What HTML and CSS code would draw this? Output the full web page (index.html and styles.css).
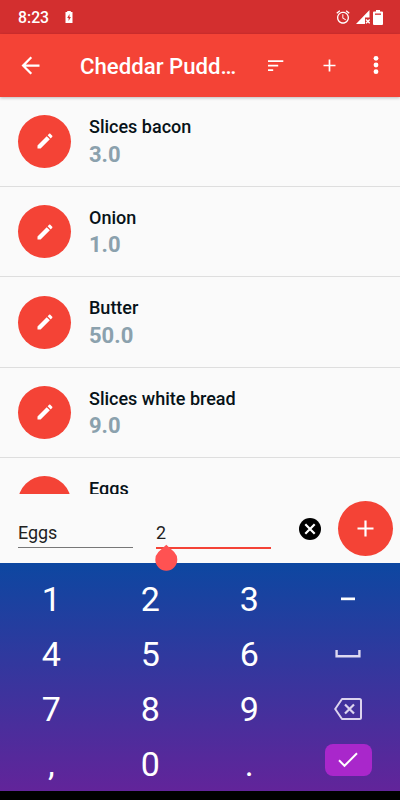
FILE: index.html
```
<!DOCTYPE html>
<html lang="en">
<head>
    <meta charset="UTF-8">
    <meta name="viewport" content="width=device-width, initial-scale=1.0">
    <title>Cheddar Pudding</title>
    <link rel="stylesheet" href="styles.css">
</head>
<body>
    <div class="status">
        <span class="time">8:23</span>
        <svg class="saver" width="8" height="12" viewBox="0 0 8 12"><path fill="#fff" fill-rule="evenodd" d="M2.2 0h3.6v1H7.5v11H.5V1h1.7zM4.5 3L2.2 7h1.4v3l2.300-4H4.500z"/></svg>
        <div class="status-right">
            <svg width="16" height="16" viewBox="0 0 24 24"><path fill="#fff" d="M22 5.720l-4.600-3.860-1.290 1.530 4.600 3.860L22 5.720zM7.880 3.390L6.600 1.860 2 5.710l1.290 1.530 4.590-3.850zM12.500 8H11v6l4.750 2.850.750-1.230-4-2.370V8zM12 4c-4.970 0-9 4.030-9 9s4.020 9 9 9c4.970 0 9-4.030 9-9s-4.030-9-9-9zm0 16c-3.870 0-7-3.130-7-7s3.130-7 7-7 7 3.130 7 7-3.130 7-7 7z"/></svg>
            <svg class="signal" width="14" height="14" viewBox="0 0 14 14"><path fill="#fff" d="M13.500 0v7.500H9V14H0z"/><path stroke="#fff" stroke-width="1.400" d="M10 9.500l3.700 3.700M13.700 9.500L10 13.200"/></svg>
            <svg class="battery" width="10" height="15" viewBox="0 0 10 15"><path fill="#fff" d="M3 0h4v1.500h2q1 0 1 1V14q0 1-1 1H1q-1 0-1-1V2.500q0-1 1-1h2z"/><path fill="#d32f2f" d="M2 3.500h6v1.300H2z"/></svg>
        </div>
    </div>
    <div class="appbar">
        <svg class="back" width="27" height="27" viewBox="0 0 24 24"><path fill="#fff" d="M20 11H7.830l5.590-5.590L12 4l-8 8 8 8 1.410-1.410L7.830 13H20v-2z"/></svg>
        <h1 class="title">Cheddar Pudd…</h1>
        <svg class="sort" width="16" height="12" viewBox="0 0 16 12"><path stroke="#fff" stroke-width="1.700" d="M0 1.200h15.300M0 5.700h10.200M0 10.100h5.200"/></svg>
        <svg class="add" width="13" height="13" viewBox="0 0 13 13"><path stroke="#fff" stroke-width="1.700" d="M.5 6.500h12M6.500.5v12"/></svg>
        <svg class="more" width="6" height="20" viewBox="0 0 6 20"><g fill="#fff"><circle cx="3" cy="3.300" r="2.400"/><circle cx="3" cy="10" r="2.400"/><circle cx="3" cy="16.700" r="2.400"/></g></svg>
    </div>
    <div class="list">
        <div class="item">
            <div class="edit"><svg width="20" height="20" viewBox="0 0 24 24"><use href="#pencil"/></svg></div>
            <div class="info"><p class="name">Slices bacon</p><p class="amount">3.0</p></div>
        </div>
        <div class="item">
            <div class="edit"><svg width="20" height="20" viewBox="0 0 24 24"><use href="#pencil"/></svg></div>
            <div class="info"><p class="name">Onion</p><p class="amount">1.0</p></div>
        </div>
        <div class="item">
            <div class="edit"><svg width="20" height="20" viewBox="0 0 24 24"><use href="#pencil"/></svg></div>
            <div class="info"><p class="name">Butter</p><p class="amount">50.0</p></div>
        </div>
        <div class="item">
            <div class="edit"><svg width="20" height="20" viewBox="0 0 24 24"><use href="#pencil"/></svg></div>
            <div class="info"><p class="name">Slices white bread</p><p class="amount">9.0</p></div>
        </div>
        <div class="item">
            <div class="edit"></div>
            <div class="info"><p class="name">Eggs</p></div>
        </div>
    </div>
    <div class="entry">
        <div class="field">Eggs</div>
        <div class="field active">2
            <svg class="handle" width="23" height="27" viewBox="0 0 23 27"><path fill="#ff5252" d="M11.300.7l7.900 7.400a11 11 0 1 1-15.800 0z"/></svg>
        </div>
        <svg class="clear" width="22" height="22" viewBox="0 0 22 22"><circle cx="11" cy="11" r="11"/><path stroke="#fff" stroke-width="2.200" d="M6.300 6.300l9.400 9.400M15.700 6.300l-9.400 9.400"/></svg>
        <div class="fab"><svg width="17" height="17" viewBox="0 0 17 17"><path stroke="#fff" stroke-width="2.200" d="M.5 8.500h16M8.500.5v16"/></svg></div>
    </div>
    <div class="keyboard">
        <span>1</span><span>2</span><span>3</span>
        <span><svg width="16" height="4" viewBox="0 0 16 4"><path fill="#fff" d="M1 .5h14v2.700H1z"/></svg></span>
        <span>4</span><span>5</span><span>6</span>
        <span><svg class="space" width="26" height="8" viewBox="0 0 26 8"><path fill="none" stroke="#dcd8f0" stroke-width="2.400" d="M1.600 0v6.300h22.800V0"/></svg></span>
        <span>7</span><span>8</span><span>9</span>
        <span><svg width="28" height="22" viewBox="0 0 28 22"><path fill="none" stroke="#dcd3ee" stroke-width="2" stroke-linejoin="round" d="M8 1h17.500q1.500 0 1.500 1.500v17q0 1.500-1.500 1.500H8L1.200 11z"/><path stroke="#dcd3ee" stroke-width="2.200" d="M11 6.500l9 9M20 6.500l-9 9"/></svg></span>
        <span>,</span><span>0</span><span>.</span>
        <span><i class="enter"><svg width="20" height="16" viewBox="0 0 20 16"><path fill="none" stroke="#fff" stroke-width="2" d="M1 8.300l5.500 5.500L19 1.300"/></svg></i></span>
    </div>
    <div class="navbar"></div>
    <svg width="0" height="0" class="defs"><defs><path id="pencil" fill="#fff" d="M3 17.250V21h3.750L17.810 9.940l-3.750-3.750L3 17.250zM20.710 7.040c.390-.390.390-1.020 0-1.410l-2.340-2.340c-.390-.390-1.020-.390-1.410 0l-1.830 1.830 3.750 3.750 1.830-1.830z"/></defs></svg>
</body>
</html>
```
FILE: styles.css
```
*{
    margin: 0;
    padding: 0;
    box-sizing: border-box;
}
body{
    width: 400px;
    height: 800px;
    overflow: hidden;
    display: flex;
    flex-direction: column;
    background: #fafafa;
    font-family: Roboto, sans-serif;
}
svg{
    display: block;
    flex: none;
}
.defs{
    position: absolute;
}
.status{
    flex: none;
    height: 34px;
    display: flex;
    align-items: center;
    padding: 0 17px 0 18px;
    background: #d32f2f;
    color: #fff;
}
.time{
    width: 46.500px;
    font-size: 15.800px;
    font-weight: 500;
}
.status-right{
    display: flex;
    align-items: center;
    margin-left: auto;
}
.signal{
    margin-left: 5px;
}
.battery{
    margin-left: 3px;
}
.appbar{
    flex: none;
    height: 62.500px;
    display: flex;
    align-items: center;
    padding: 0 21.500px 0 17px;
    background: #f44336;
    color: #fff;
    box-shadow: 0 1px 3px rgba(0, 0, 0, .25);
    z-index: 1;
}
.title{
    width: 188px;
    margin: 2px 0 0 36px;
    font-size: 22.200px;
    font-weight: 500;
    white-space: nowrap;
}
.sort{
    margin-top: 1px;
}
.add{
    margin-left: 38.500px;
}
.more{
    margin-left: auto;
}
.list{
    flex: none;
    height: 397.500px;
    overflow: hidden;
}
.item{
    height: 90.400px;
    display: flex;
    padding: 18.300px 18px 0;
    border-bottom: 1px solid #dedede;
}
.edit{
    flex: none;
    width: 53px;
    height: 53px;
    display: flex;
    align-items: center;
    justify-content: center;
    border-radius: 50%;
    background: #f44336;
}
.info{
    margin-left: 18px;
}
.name{
    margin-top: .7px;
    font-size: 18px;
    line-height: 24px;
    font-weight: 500;
    color: #071218;
}
.amount{
    margin-top: 1.500px;
    font-size: 22px;
    line-height: 28px;
    font-weight: 700;
    color: #8ba1ad;
}
.entry{
    flex: none;
    height: 69px;
    display: flex;
    align-items: flex-start;
    padding: 7px 0 0 18px;
}
.field{
    width: 115px;
    height: 47px;
    padding-top: 20px;
    margin-right: 23px;
    border-bottom: 1px solid #777;
    font-size: 17.900px;
    line-height: 24px;
    color: #212121;
}
.active{
    position: relative;
    height: 48px;
    border-bottom: 2px solid #f44336;
}
.handle{
    position: absolute;
    left: -1px;
    top: 43px;
    z-index: 2;
}
.clear{
    margin: 17px 0 0 5px;
}
.fab{
    width: 55px;
    height: 55px;
    margin-left: 17px;
    display: flex;
    align-items: center;
    justify-content: center;
    border-radius: 50%;
    background: #f44336;
}
.keyboard{
    flex: none;
    height: 228px;
    display: grid;
    grid-template-columns: repeat(4, 99px);
    grid-template-rows: repeat(4, 55px);
    padding: 8.500px 0 0 1.800px;
    background: linear-gradient(#0d47a1, #62249a);
    color: #fff;
    font-size: 34px;
    line-height: 40px;
}
.keyboard span{
    display: flex;
    align-items: center;
    justify-content: center;
}
.enter{
    width: 47px;
    height: 32px;
    margin-top: -9px;
    display: flex;
    align-items: center;
    justify-content: center;
    border-radius: 8px;
    background: #a927cb;
}
.navbar{
    flex: 1;
    background: #000;
}
```
